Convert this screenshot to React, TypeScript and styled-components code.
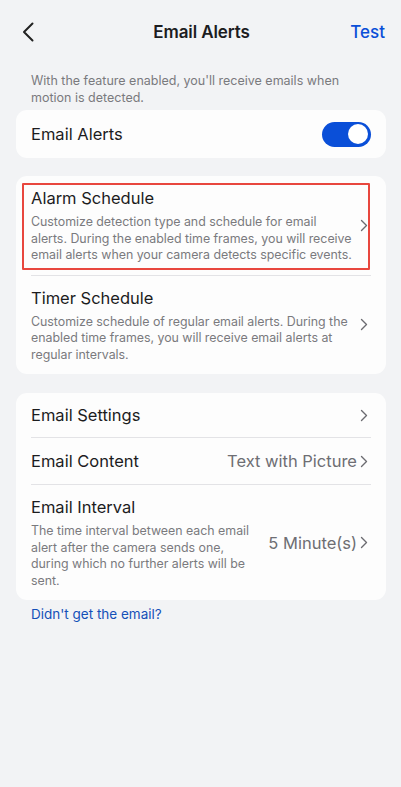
import React from 'react';
import styled, { createGlobalStyle } from 'styled-components';

const GlobalStyle = createGlobalStyle`
  html, body {
    margin: 0;
    padding: 0;
    background: #f2f3f5;
    font-family: Inter, "Noto Sans", "Liberation Sans", sans-serif;
    -webkit-font-smoothing: antialiased;
  }
`;

const Page = styled.div`
  width: 401px;
  min-height: 787px;
  background: #f2f3f5;
  box-sizing: border-box;
`;

const Header = styled.header`
  height: 64px;
  display: grid;
  grid-template-columns: 60px 1fr 60px;
  align-items: center;
  padding: 0 16px 0 22px;
  box-sizing: border-box;
`;

const BackButton = styled.button`
  background: none;
  border: none;
  padding: 0;
  display: flex;
  align-items: center;
  cursor: pointer;
`;

const Title = styled.h1`
  margin: 0 0 0 -4px;
  text-align: center;
  font-size: 17px;
  font-weight: 600;
  color: #1c1c1e;
  letter-spacing: -0.1px;
`;

const TestLink = styled.button`
  background: none;
  border: none;
  padding: 0;
  justify-self: end;
  font-family: inherit;
  font-size: 17px;
  font-weight: 500;
  color: #0a4fd8;
  cursor: pointer;
`;

const Content = styled.main`
  padding: 8px 15px 0 16px;
  display: flex;
  flex-direction: column;
`;

const Intro = styled.p`
  margin: 0 0 4px;
  padding: 0 15px;
  font-size: 12.5px;
  line-height: 17px;
  color: #7a7a7e;
`;

const Card = styled.section<{ $gap?: number }>`
  background: #fdfdfd;
  border-radius: 11px;
  padding: 0 15px;
  margin-bottom: ${({ $gap }) => $gap ?? 18}px;
`;

const Row = styled.div<{ $height?: number; $divider?: boolean }>`
  position: relative;
  display: flex;
  align-items: center;
  gap: 5px;
  min-height: ${({ $height }) => $height ?? 45}px;
  border-bottom: ${({ $divider }) => ($divider ? '1px solid #e3e3e6' : 'none')};
`;

const TallRow = styled(Row)`
  padding: 11px 0 11px;
  box-sizing: border-box;
`;

const RowMain = styled.div`
  flex: 1;
  min-width: 0;
  display: flex;
  flex-direction: column;
`;

const RowTitle = styled.span`
  font-size: 16.5px;
  line-height: 22px;
  color: #1c1c1e;
`;

const RowDesc = styled.span<{ $width?: number }>`
  margin-top: 5px;
  max-width: ${({ $width }) => ($width ? `${$width}px` : 'none')};
  font-size: 12.4px;
  line-height: 16.5px;
  letter-spacing: -0.02px;
  color: #7a7a7e;
`;

const RowValue = styled.span`
  font-size: 16.5px;
  color: #6e6e73;
  white-space: nowrap;
`;

const Trailing = styled.div`
  display: flex;
  align-items: center;
  gap: 3px;
`;

const Highlight = styled.div`
  position: absolute;
  top: 7px;
  bottom: 5px;
  left: -9px;
  right: 1px;
  border: 2px solid #e8473e;
  border-radius: 1px;
  pointer-events: none;
`;

const Switch = styled.div<{ $on: boolean }>`
  width: 49px;
  height: 25px;
  border-radius: 13px;
  background: ${({ $on }) => ($on ? '#0a4fd8' : '#d8d8dc')};
  display: flex;
  align-items: center;
  justify-content: ${({ $on }) => ($on ? 'flex-end' : 'flex-start')};
  padding: 0 3px;
  box-sizing: border-box;
`;

const Knob = styled.div`
  width: 20px;
  height: 20px;
  border-radius: 50%;
  background: #ffffff;
`;

const HelpLink = styled.a`
  margin-left: 15px;
  font-size: 13.5px;
  line-height: 18px;
  color: #1450b8;
  text-decoration: none;
`;

const ChevronSvg = styled.svg`
  flex-shrink: 0;
  margin-right: 3px;
`;

const Chevron = () => (
  <ChevronSvg width="8" height="13" viewBox="0 0 8 13" fill="none">
    <path d="M1.5 1.5l5 5-5 5" stroke="#6b6b70" strokeWidth="1.4" strokeLinecap="round" strokeLinejoin="round" />
  </ChevronSvg>
);

const BackIcon = () => (
  <svg width="12" height="20" viewBox="0 0 12 20" fill="none">
    <path d="M10.5 1.5L2 10l8.5 8.5" stroke="#222" strokeWidth="2" strokeLinecap="round" strokeLinejoin="round" />
  </svg>
);

export default function App() {
  return (
    <Page>
      <GlobalStyle />
      <Header>
        <BackButton aria-label="Back">
          <BackIcon />
        </BackButton>
        <Title>Email Alerts</Title>
        <TestLink>Test</TestLink>
      </Header>

      <Content>
        <Intro>With the feature enabled, you'll receive emails when motion is detected.</Intro>

        <Card>
          <Row $height={48}>
            <RowMain>
              <RowTitle>Email Alerts</RowTitle>
            </RowMain>
            <Switch $on>
              <Knob />
            </Switch>
          </Row>
        </Card>

        <Card $gap={19}>
          <TallRow $divider>
            <Highlight />
            <RowMain>
              <RowTitle>Alarm Schedule</RowTitle>
              <RowDesc>
                Customize detection type and schedule for email alerts. During the enabled time frames, you
                will receive email alerts when your camera detects specific events.
              </RowDesc>
            </RowMain>
            <Chevron />
          </TallRow>
          <TallRow>
            <RowMain>
              <RowTitle>Timer Schedule</RowTitle>
              <RowDesc>
                Customize schedule of regular email alerts. During the enabled time frames, you will receive
                email alerts at regular intervals.
              </RowDesc>
            </RowMain>
            <Chevron />
          </TallRow>
        </Card>

        <Card $gap={5}>
          <Row $height={44} $divider>
            <RowMain>
              <RowTitle>Email Settings</RowTitle>
            </RowMain>
            <Chevron />
          </Row>
          <Row $height={46} $divider>
            <RowMain>
              <RowTitle>Email Content</RowTitle>
            </RowMain>
            <Trailing>
              <RowValue>Text with Picture</RowValue>
              <Chevron />
            </Trailing>
          </Row>
          <TallRow>
            <RowMain>
              <RowTitle>Email Interval</RowTitle>
              <RowDesc $width={222}>
                The time interval between each email alert after the camera sends one, during which no further
                alerts will be sent.
              </RowDesc>
            </RowMain>
            <Trailing>
              <RowValue>5 Minute(s)</RowValue>
              <Chevron />
            </Trailing>
          </TallRow>
        </Card>

        <HelpLink href="#">Didn't get the email?</HelpLink>
      </Content>
    </Page>
  );
}
